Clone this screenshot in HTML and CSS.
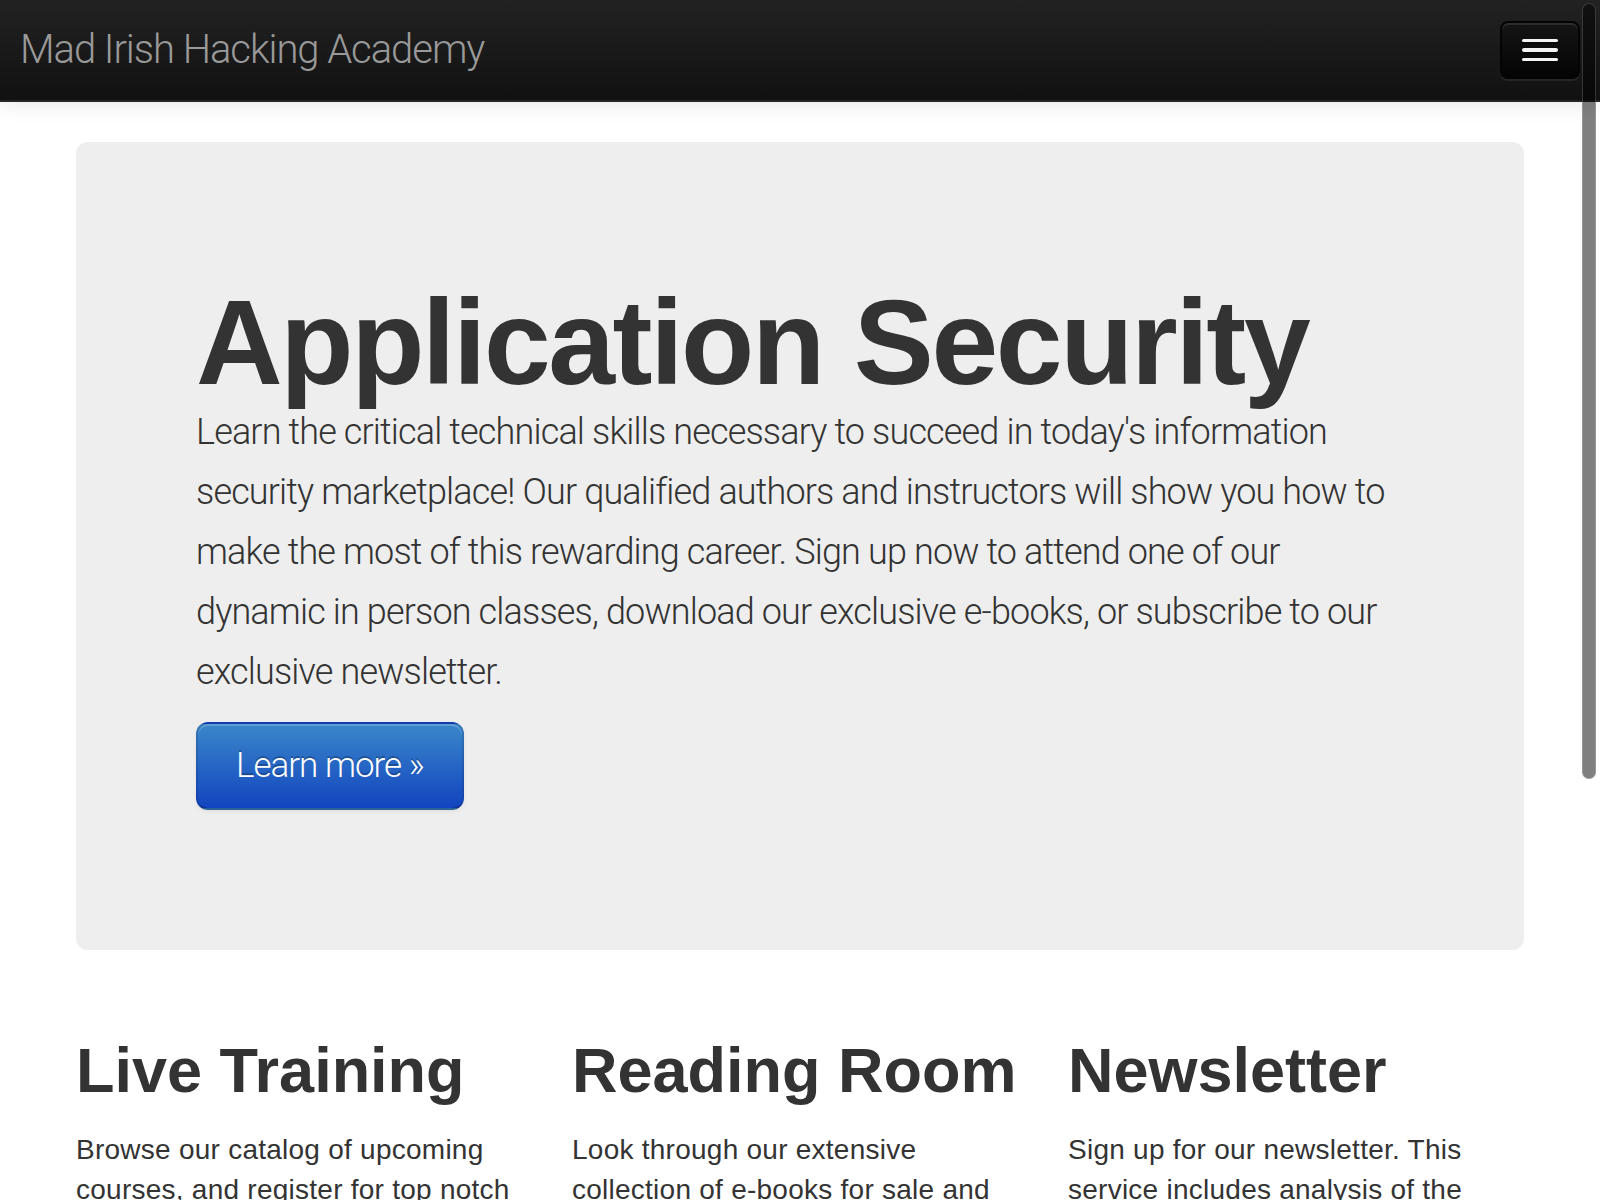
FILE: index.html
```html
<!DOCTYPE html>
<html lang="en">
<head>
<meta charset="utf-8">
<title>Mad Irish Hacking Academy</title>
<link rel="stylesheet" href="styles.css">
</head>
<body>
<header class="navbar">
  <div class="navbar-inner">
    <a class="brand" href="#">Mad Irish Hacking Academy</a>
    <button class="btn-navbar" type="button" aria-label="Toggle navigation">
      <span class="icon-bar"></span>
      <span class="icon-bar"></span>
      <span class="icon-bar"></span>
    </button>
  </div>
</header>
<main class="container">
  <section class="hero-unit">
    <h1>Application Security</h1>
    <p class="lead">Learn the critical technical skills necessary to succeed in today's information security marketplace! Our qualified authors and instructors will show you how to make the most of this rewarding career. Sign up now to attend one of our dynamic in person classes, download our exclusive e-books, or subscribe to our exclusive newsletter.</p>
    <p class="actions"><a class="btn-primary" href="#">Learn more &raquo;</a></p>
  </section>
  <section class="row">
    <div class="span4">
      <h2>Live Training</h2>
      <p>Browse our catalog of upcoming courses, and register for top notch training delivered by industry experts in a classroom near you.</p>
    </div>
    <div class="span4">
      <h2>Reading Room</h2>
      <p>Look through our extensive collection of e-books for sale and download the latest publications from our authors.</p>
    </div>
    <div class="span4">
      <h2>Newsletter</h2>
      <p>Sign up for our newsletter. This service includes analysis of the latest threats and vulnerabilities delivered to your inbox.</p>
    </div>
  </section>
</main>
<div class="scroll-thumb"></div>
</body>
</html>
```
FILE: styles.css
```css
html, body {
  margin: 0;
  padding: 0;
}
body {
  background: #ffffff;
  color: #333333;
  font-family: "Liberation Sans", Arial, sans-serif;
  font-size: 28px;
  line-height: 40px;
  overflow: hidden;
  height: 1200px;
}
.navbar {
  margin-bottom: 40px;
}
.navbar-inner {
  display: flex;
  justify-content: space-between;
  align-items: flex-start;
  padding: 10px;
  height: 80px;
  background: linear-gradient(to bottom, #222222, #111111);
  border-bottom: 2px solid #252525;
  box-shadow: 0 2px 20px rgba(0, 0, 0, 0.1);
}
.brand {
  display: block;
  padding: 20px 20px 20px 10px;
  font-family: Roboto, "Liberation Sans", sans-serif;
  font-weight: 300;
  font-size: 40px;
  line-height: 40px;
  color: #999999;
  text-decoration: none;
  letter-spacing: -1.05px;
}
.btn-navbar {
  display: flex;
  flex-direction: column;
  gap: 6px;
  margin: 11px 10px 0 10px;
  padding: 16px 20px;
  width: 80px;
  height: 58px;
  box-sizing: border-box;
  background: linear-gradient(to bottom, #151515, #040404);
  border: 2px solid #040404;
  border-radius: 8px;
  box-shadow: inset 0 2px 0 rgba(255, 255, 255, 0.1), 0 2px 0 rgba(255, 255, 255, 0.075);
}
.icon-bar {
  display: block;
  width: 36px;
  height: 4px;
  border-radius: 2px;
  background: #f5f5f5;
  box-shadow: 0 2px 0 rgba(0, 0, 0, 0.25);
}
.container {
  width: 1448px;
  margin: 0 auto;
}
.hero-unit {
  background: #eeeeee;
  border-radius: 12px;
  padding: 120px;
  margin-bottom: 60px;
}
.hero-unit h1 {
  margin: 20px 0 0;
  font-family: "Liberation Sans", Arial, sans-serif;
  font-weight: bold;
  font-size: 120px;
  line-height: 120px;
  letter-spacing: -2.4px;
  color: #333333;
}
.lead {
  margin: 0 0 20px;
  font-family: Roboto, "Liberation Sans", sans-serif;
  font-weight: 300;
  font-size: 36px;
  line-height: 60px;
  letter-spacing: -0.85px;
  color: #333333;
}
.actions {
  display: flex;
  margin: 0 0 20px;
}
.btn-primary {
  display: block;
  padding: 22px 38px;
  font-family: Roboto, "Liberation Sans", sans-serif;
  font-weight: 300;
  font-size: 35px;
  line-height: 40px;
  color: #ffffff;
  text-decoration: none;
  border-radius: 12px;
  border: 2px solid rgba(0, 0, 0, 0.1);
  border-bottom-color: rgba(0, 0, 0, 0.25);
  background: linear-gradient(to bottom, #3a87c9, #1244bf);
  box-shadow: inset 0 2px 0 rgba(255, 255, 255, 0.2), 0 2px 4px rgba(0, 0, 0, 0.05);
  text-shadow: 0 -2px 0 rgba(0, 0, 0, 0.25);
  letter-spacing: -1px;
}
.row {
  display: flex;
  gap: 40px;
}
.span4 {
  width: 456px;
}
.span4 h2 {
  margin: 20px 0;
  font-size: 63px;
  line-height: 80px;
  font-weight: bold;
  letter-spacing: 0;
  color: #333333;
}
.span4 p {
  margin: 0 0 20px;
  font-size: 28px;
  line-height: 40px;
  letter-spacing: 0.25px;
}
.scroll-thumb {
  position: fixed;
  top: 3px;
  right: 4px;
  width: 14px;
  height: 776px;
  box-sizing: border-box;
  border-radius: 7px;
  background: rgba(0, 0, 0, 0.5);
  border: 1px solid rgba(255, 255, 255, 0.18);
}
```
